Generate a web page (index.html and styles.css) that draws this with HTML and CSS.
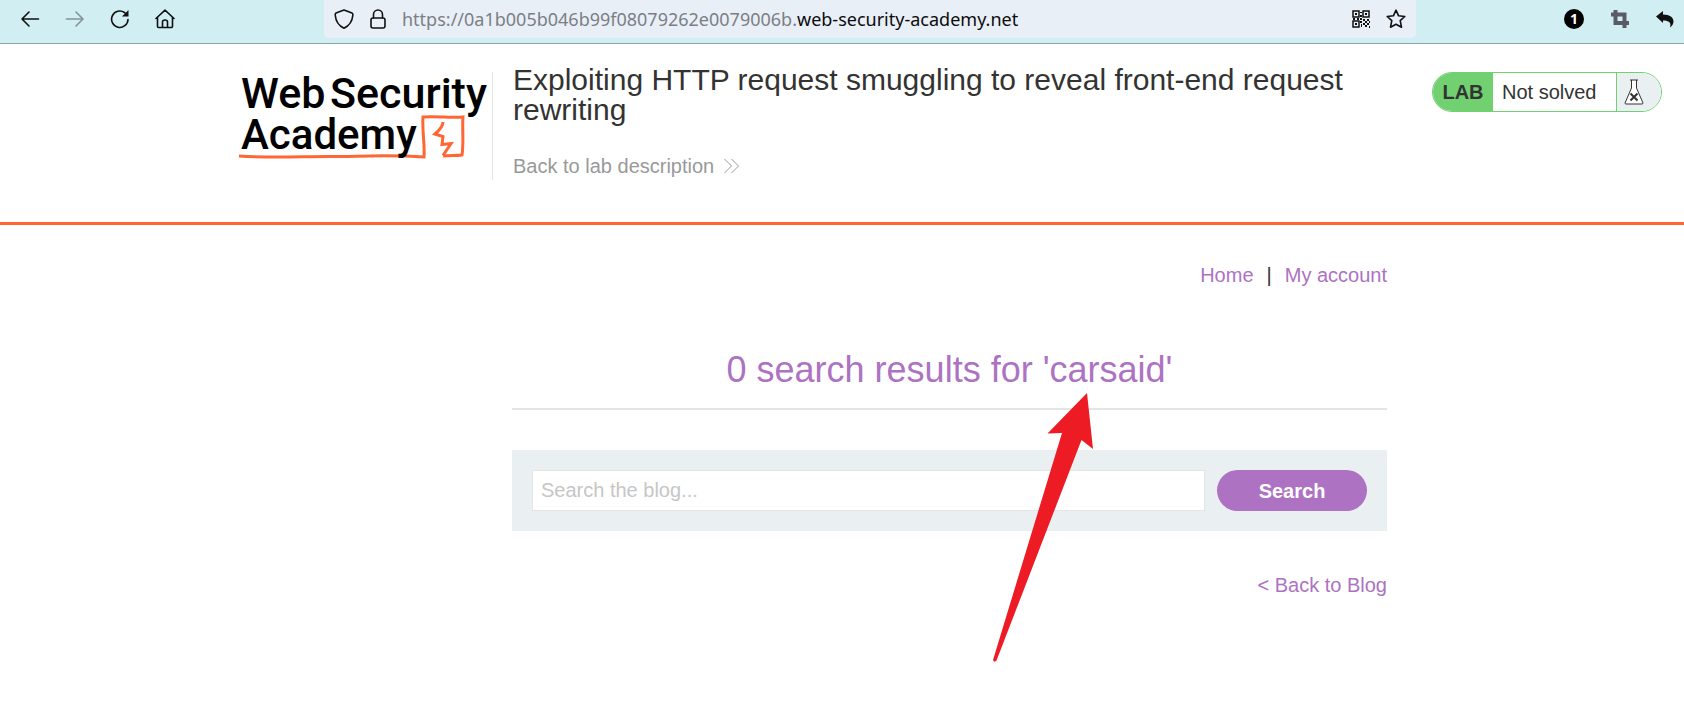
FILE: index.html
```html
<!DOCTYPE html>
<html lang="en">
<head>
<meta charset="utf-8">
<title>Exploiting HTTP request smuggling to reveal front-end request rewriting</title>
<link rel="stylesheet" href="styles.css">
</head>
<body>
<div class="toolbar">
  <div class="nav-buttons">
    <button class="icon-button" aria-label="Back"><svg width="20" height="20" viewBox="0 0 20 20"><path d="M18.5 10H2M9 3L2 10l7 7"/></svg></button>
    <button class="icon-button faded" aria-label="Forward"><svg width="20" height="20" viewBox="0 0 20 20"><path d="M1.500 10H18M11 3l7 7-7 7"/></svg></button>
    <button class="icon-button" aria-label="Reload"><svg width="20" height="20" viewBox="0 0 20 20"><path d="M18 10.500A8.200 8.200 0 1 1 14.500 3.500L17 6"/><path class="solid" d="M18.500 1v6.500H12z"/></svg></button>
    <button class="icon-button" aria-label="Home"><svg width="20" height="20" viewBox="0 0 20 20"><path d="M1 9.500L10 1.200l9 8.300M2.500 8.500v9q0 1 1 1h13q1 0 1-1v-9M7.500 18v-5q0-2 2.500-2t2.500 2v5"/></svg></button>
  </div>
  <div class="address">
    <svg width="20" height="20" viewBox="0 0 20 20"><path d="M10 1L18 4q1 .4 .9 2Q18 15.500 10 19.200Q2 15.500 1.200 6q0-1.600 .8-2z"/></svg>
    <svg width="20" height="20" viewBox="0 0 20 20"><rect x="3" y="9" width="14" height="10" rx="2"/><path d="M5.500 9V5.500a4.500 4.500 0 0 1 9 0V9"/></svg>
    <span class="url">https://0a1b005b046b99f08079262e0079006b.<b>web-security-academy.net</b></span>
    <svg class="qr" width="20" height="20" viewBox="0 0 20 20"><path d="M1 2h6v6H1zM11 2h6v6h-6zM1 12h6v6H1z"/><path class="solid" d="M3 4h2v2H3zM13 4h2v2h-2zM3 14h2v2H3zM8 3h2v1H8zM8 6h2v2H8zM1 9h2v2H1zM5 9h2v2H5zM8 9h2v2H8zM8 12h2v2H8zM11 10h2v2h-2zM15 10h2v2h-2zM13 12h2v2h-2zM11 14h2v2h-2zM15 14h2v2h-2zM13 16h2v2h-2zM9 15h1v3H9zM17 12h1v2h-1zM17 17h1v2h-1z"/></svg>
    <svg width="20" height="20" viewBox="0 0 20 20"><path d="M10 1.200l2.600 5.600 6.200.7-4.600 4.200 1.300 6.500L10 15.200l-5.500 3 1.300-6.500L1.200 7.500l6.200-.7z"/></svg>
  </div>
  <div class="extensions">
    <button class="icon-button" aria-label="One notification"><span class="count">1</span></button>
    <button class="icon-button crop" aria-label="Crop"><svg width="18" height="18" viewBox="0 0 18 18"><path d="M4.500 0v13H18M0 4.500h13.500V18"/></svg></button>
    <button class="icon-button" aria-label="Undo"><svg width="18" height="18" viewBox="0 0 18 18"><path class="solid" d="M0 6.500L7 1v3.500c7 0 10.500 3 10.500 7 0 2.500-1.500 4.500-3.500 6 1.500-5-1-7-7-7V13z"/></svg></button>
  </div>
</div>

<header class="lab-header">
  <a class="logo" href="#" aria-label="Web Security Academy">
    <svg width="252" height="90" viewBox="0 0 252 90">
      <path class="sketch" d="M2 84c30 2 60 .5 90 .5s60-2 95 .5c1-13-2-25-1-40 12-1 28 1 40 0-1 12 1 25-1 38-7 1-13 0-19 1"/>
      <path class="bolt" d="M206 50q0 5-8 12l8 2.500-1 8 9-1-8 12"/>
      <text x="4" y="36">Web</text><text x="93" y="36">Security</text><text class="second" x="4" y="77">Academy</text>
    </svg>
  </a>
  <div class="title">
    <h2>Exploiting HTTP request smuggling to reveal front-end request rewriting</h2>
    <a href="#">Back to lab description <svg width="15" height="16" viewBox="0 0 15 16"><path d="M.5 1l7 7-7 7M7.500 1l7 7-7 7"/></svg></a>
  </div>
  <div class="status">
    <span class="lab">LAB</span>
    <span class="state">Not solved</span>
    <span class="flask"><svg width="20" height="26" viewBox="0 0 20 26"><path d="M6 1h8M7.500 1v8L1 24q0 1 1 1h16q1 0 1-1L12.500 9V1"/><path class="cross" d="M6.500 14.500l7 7M13.500 14.500l-7 7"/></svg></span>
  </div>
</header>

<main class="blog">
  <nav class="links"><a href="#">Home</a><span>|</span><a href="#">My account</a></nav>
  <h1>0 search results for 'carsaid'</h1>
  <form class="search">
    <input type="text" placeholder="Search the blog..." aria-label="Search the blog">
    <button type="button">Search</button>
  </form>
  <a class="back" href="#">&lt; Back to Blog</a>
  <svg class="arrow" width="102" height="270" viewBox="0 0 102 270"><path d="M95 0L101 56 89.500 47 4.500 267.500Q2.500 270 1 267L70 40 55.500 40.500z"/></svg>
</main>
</body>
</html>
```
FILE: styles.css
```css
* { box-sizing: border-box; }
body {
  min-height: 100vh;
  margin: 0;
  background: #fff;
  color: #333332;
  font: 20px/24px "Liberation Sans", Arial, sans-serif;
}
a { color: #ad72c2; text-decoration: none; }
button { border: 0; padding: 0; font: inherit; cursor: pointer; }
svg { flex: none; fill: none; stroke: currentColor; }
.solid { fill: currentColor; stroke: none; }

.toolbar {
  display: flex;
  align-items: flex-start;
  height: 44px;
  background: #d1eef2;
  border-bottom: 1px solid #8fa5aa;
  color: #111;
}
.toolbar svg { stroke-width: 1.600; stroke-linejoin: round; stroke-linecap: round; }
.toolbar .qr { stroke-width: 1.500; stroke-linejoin: miter; }
.icon-button { display: flex; background: none; color: inherit; }
.faded { opacity: 0.4; }
.nav-buttons { display: flex; gap: 25px; width: 324px; padding: 9px 0 0 20px; flex: none; }
.address {
  display: flex;
  align-items: center;
  flex: 1;
  min-width: 0;
  height: 38px;
  padding: 0 10px;
  gap: 14px;
  background: #e9eff7;
  border-radius: 0 0 5px 5px;
}
.url {
  flex: 1;
  color: #7b7f84;
  font: 18px/24px "Noto Sans", sans-serif;
  white-space: nowrap;
  overflow: hidden;
}
.url b { color: #0c0c0d; font-weight: 400; }
.extensions { display: flex; align-items: center; gap: 27px; height: 38px; padding-right: 10px; width: 268px; justify-content: flex-end; flex: none; }
.count {
  width: 20px;
  border-radius: 50%;
  background: #000;
  color: #fff;
  font: bold 14px/20px "Noto Sans", sans-serif;
  text-align: center;
}
.crop { color: #5b5b66; }
.toolbar .crop svg { stroke-width: 4; stroke-linecap: butt; stroke-linejoin: miter; }

.lab-header {
  display: flex;
  align-items: flex-start;
  padding: 21px 22px 42px 237px;
  border-bottom: 3px solid #ff6633;
}
.logo { width: 256px; height: 108px; margin-top: 7px; border-right: 1px solid #e5e5e5; flex: none; }
.logo svg { display: block; overflow: visible; }
.logo text { fill: #000; stroke: none; font: 500 43px Roboto, sans-serif; }
.logo .second { font-size: 42px; }
.sketch { stroke: #ff6633; stroke-width: 3; }
.bolt { stroke: #ff6633; stroke-width: 3; }
.title { flex: 1; max-width: 875px; padding-left: 20px; }
.title h2 { margin: 0 0 29px; font-size: 30px; line-height: 30px; font-weight: 400; }
.title a { display: inline-flex; align-items: center; gap: 10px; color: #999; }
.status {
  display: flex;
  height: 40px;
  margin: 7px 0 0 auto;
  border: 1px solid #71d171;
  border-radius: 20px;
  overflow: hidden;
  line-height: 38px;
}
.lab { width: 60px; background: #71d171; font-weight: 700; text-align: center; }
.state { width: 123px; padding-left: 9px; }
.flask { display: flex; align-items: center; width: 45px; padding-left: 7px; border-left: 1px solid #71d171; background: #eaeff2; }
.flask path { fill: #fff; }
.flask .cross { stroke-width: 2; }

.blog { position: relative; margin: 0 297px 0 512px; padding: 38px 0 96px; }
.links { display: flex; justify-content: flex-end; gap: 13px; }
h1 {
  margin: 62px 0 40px;
  padding-bottom: 17px;
  border-bottom: 2px solid #e5e5e5;
  color: #ad72c2;
  font-size: 36px;
  line-height: 42px;
  font-weight: 400;
  text-align: center;
}
.search { display: flex; gap: 12px; padding: 20px; background: #eaeff2; }
.search input {
  flex: 1;
  min-width: 0;
  height: 41px;
  padding: 0 8px;
  border: 1px solid #e5e5e5;
  font: inherit;
}
.search input::placeholder { color: #c6c6c6; opacity: 1; }
.search button { width: 150px; border-radius: 21px; background: #ad72c2; color: #fff; font-weight: 700; }
.back { display: block; margin-top: 42px; text-align: right; }
.arrow { position: absolute; top: 168px; left: 480px; pointer-events: none; }
.arrow path { fill: #ed1c24; stroke: none; }
```
